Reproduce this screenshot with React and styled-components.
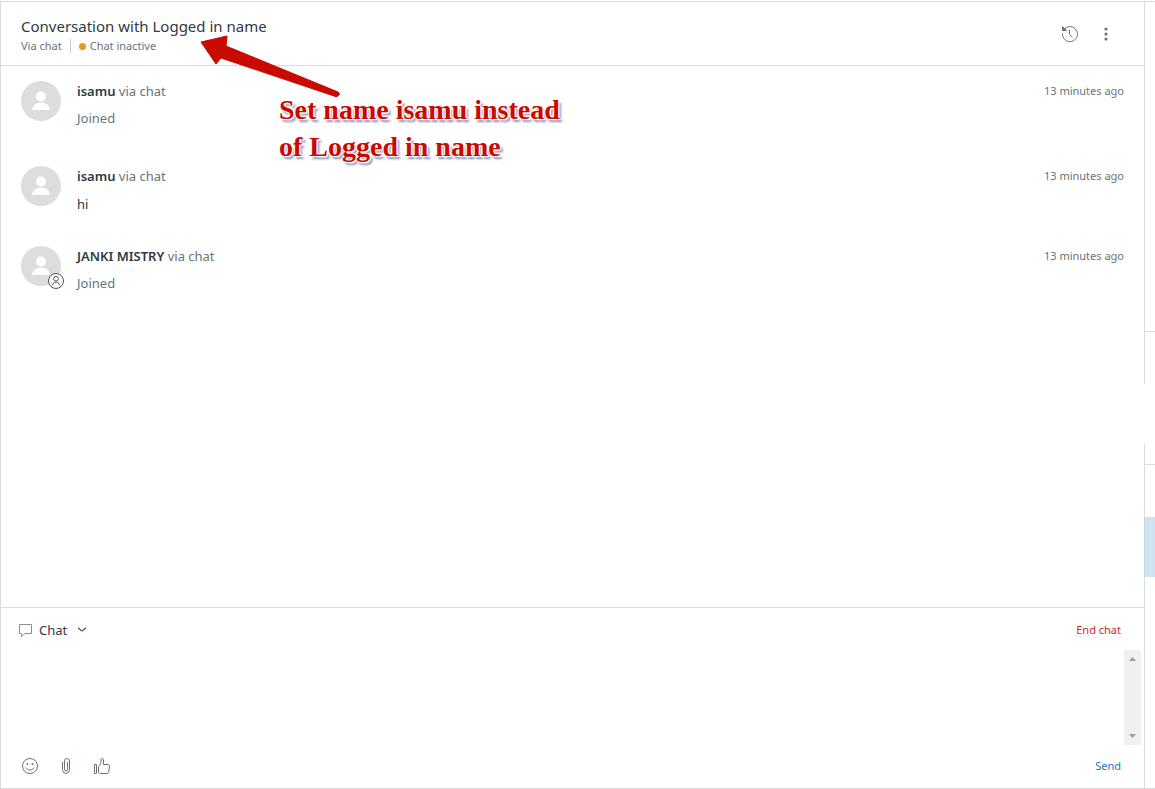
import React from 'react';
import styled, {createGlobalStyle, css} from 'styled-components';

const line = '#d8dcde';

const GlobalStyle = createGlobalStyle`
  * {
    box-sizing: border-box;
  }
  body {
    margin: 0;
    background: #fff;
    color: #2f3941;
    font-family: "Noto Sans", "Open Sans", sans-serif;
    font-size: 13px;
    line-height: 20px;
  }
  button, select, textarea {
    font: inherit;
    color: inherit;
    background: none;
    border: 0;
    padding: 0;
    margin: 0;
  }
  svg {
    display: block;
  }
`;

const Page = styled.div`
  display: flex;
  min-height: 100vh;
  padding-top: 1px;
`;

const Conversation = styled.main`
  position: relative;
  flex: 1;
  min-width: 0;
  display: flex;
  flex-direction: column;
  border: solid ${line};
  border-width: 1px 0 1px 1px;
`;

const Header = styled.header`
  display: flex;
  justify-content: space-between;
  height: 64px;
  padding: 14px 28px 0 20px;
  border-bottom: 1px solid ${line};
`;

const Title = styled.h1`
  margin: 0;
  font-size: 15px;
  font-weight: 400;
  line-height: 20px;
`;

const Status = styled.div`
  display: flex;
  align-items: center;
  font-size: 11px;
  color: #68737d;
`;

const Via = styled.span`
  padding-right: 8px;
  border-right: 1px solid #c2c8cc;
  line-height: 14px;
`;

const Dot = styled.span`
  width: 7px;
  height: 7px;
  margin: 0 4px 0 8px;
  border-radius: 50%;
  background: #ed961c;
`;

const IconRow = styled.div`
  display: flex;
  align-items: center;
  gap: 16px;
  height: 36px;
  color: #68737d;
`;

const IconButton = styled.button`
  display: flex;
  align-items: center;
  justify-content: center;
  width: 20px;
  height: 20px;
  color: #68737d;
  cursor: pointer;
`;

const Messages = styled.ul`
  flex: 1;
  margin: 0;
  padding: 15px 20px 0;
  list-style: none;
`;

const Message = styled.li`
  display: flex;
  padding-bottom: ${(props)=>(props.$event ? '38px':'32px')};
`;

const Avatar = styled.div`
  position: relative;
  width: 40px;
  height: 40px;
  margin-right: 16px;
`;

const Badge = styled.span`
  position: absolute;
  left: 27px;
  top: 27px;
`;

const Content = styled.div`
  flex: 1;
  color: #68737d;
`;

const Name = styled.strong`
  font-weight: 600;
  color: #2f3941;
`;

const Text = styled.p`
  margin: 7px 0 0;
  ${(props)=>!props.$event && css`
    margin-top: 8px;
    color: #2f3941;
  `};
`;

const Time = styled.time`
  font-size: 11px;
  color: #68737d;
`;

const Composer = styled.form`
  height: 181px;
  display: flex;
  flex-direction: column;
  border-top: 1px solid ${line};
`;

const Bar = styled.div`
  display: flex;
  align-items: center;
  justify-content: space-between;
  height: 42px;
  padding: 2px 23px 0 18px;
  ${(props)=>props.$bottom && css`
    height: 43px;
    padding: 0 23px 2px 19px;
  `};
`;

const Channel = styled.label`
  position: relative;
  display: flex;
  align-items: center;
  gap: 7px;
`;

const ChannelSelect = styled.select`
  appearance: none;
  width: 50px;
  height: 20px;
  cursor: pointer;
`;

const Chevron = styled.svg`
  position: absolute;
  right: 2px;
  top: 7px;
  pointer-events: none;
`;

const TextButton = styled.button`
  font-size: 11px;
  color: ${(props)=>props.$color};
  cursor: pointer;
`;

const Editor = styled.div`
  flex: 1;
  display: flex;
  padding-right: 3px;
`;

const Input = styled.textarea`
  flex: 1;
  padding: 0 20px;
  resize: none;
  outline: 0;
  overflow: hidden;
`;

const Scrollbar = styled.div`
  display: flex;
  flex-direction: column;
  align-items: center;
  justify-content: space-between;
  width: 17px;
  padding: 6px 0;
  background: #f0f0f0;
`;

const Side = styled.aside`
  width: 11px;
  display: flex;
  flex-direction: column;
  border: solid ${line};
  border-width: 1px 0;
`;

const SideBlock = styled.div`
  flex: ${(props)=>props.$height ? `0 0 ${props.$height}` : '1'};
  border-left: 1px solid ${(props)=>props.$blank ? 'transparent' : line};
  ${(props)=>props.$ruled && css`
    border-bottom: 1px solid ${line};
  `};
  ${(props)=>props.$active && css`
    border-left-color: #c6d6e3;
    background: #cee2f2;
  `};
`;

const Note = styled.div`
  position: absolute;
  left: 198px;
  top: 33px;
  pointer-events: none;
`;

const NoteText = styled.p`
  margin: -6px 0 0 80px;
  font: bold 28px/37px "Liberation Serif", serif;
  white-space: nowrap;
  color: #c80a00;
  text-shadow: 1px 0 1px #fff, -1px 0 1px #fff, 0 1px 1px #fff, 0 -1px 1px #fff, 1px 1px #fff, 2px 3px 2px #a3a3c8, 3px 3px 2px #b4b4d4;
`;

const messages = [
  {name:'isamu', text:'Joined', event:true},
  {name:'isamu', text:'hi'},
  {name:'JANKI MISTRY', text:'Joined', event:true, agent:true}
];

function Person() {
  return (
    <svg width='40' height='40' viewBox='0 0 40 40'>
      <circle cx='20' cy='20' r='20' fill='#ddd'/>
      <circle cx='20' cy='15.5' r='5' fill='#fff'/>
      <path d='M11 29c.6-4.500 4-7.500 9-7.500s8.400 3 9 7.500z' fill='#fff'/>
    </svg>
  )
}

function AgentBadge() {
  return (
    <Badge>
      <svg width='16' height='16' viewBox='0 0 16 16' fill='none' stroke='#49545c'>
        <circle cx='8' cy='8' r='7.500' fill='#fff'/>
        <circle cx='8' cy='5.700' r='2.300'/>
        <path d='M4.500 12.300c.2-2 1.500-3.200 3.500-3.200s3.300 1.200 3.500 3.200'/>
      </svg>
    </Badge>
  )
}

function App() {
  return (
    <Page>
      <GlobalStyle/>
      <Conversation>
        <Header>
          <div>
            <Title>Conversation with Logged in name</Title>
            <Status>
              <Via>Via chat</Via>
              <Dot/>
              <span>Chat inactive</span>
            </Status>
          </div>
          <IconRow>
            <IconButton aria-label='History'>
              <svg width='18' height='18' viewBox='0 0 18 18' fill='none' stroke='currentColor'>
                <path d='M3.500 4A7.500 7.500 0 1 1 1.500 8.500'/>
                <path d='M8.500 5v4.500l3 3'/>
                <path d='M1.500 1.500v4h4z' fill='currentColor'/>
              </svg>
            </IconButton>
            <IconButton aria-label='More options'>
              <svg width='4' height='14' viewBox='0 0 4 14' fill='currentColor'>
                <circle cx='2' cy='2' r='1.600'/>
                <circle cx='2' cy='7' r='1.600'/>
                <circle cx='2' cy='12' r='1.600'/>
              </svg>
            </IconButton>
          </IconRow>
        </Header>

        <Messages>
          {messages.map((m, i)=>(
            <Message key={i} $event={m.event}>
              <Avatar>
                <Person/>
                {m.agent && <AgentBadge/>}
              </Avatar>
              <Content>
                <div><Name>{m.name}</Name> via chat</div>
                <Text $event={m.event}>{m.text}</Text>
              </Content>
              <Time>13 minutes ago</Time>
            </Message>
          ))}
        </Messages>

        <Composer onSubmit={(e)=>e.preventDefault()}>
          <Bar>
            <Channel>
              <svg width='13' height='13' viewBox='0 0 13 13' fill='none' stroke='#87929d'>
                <path d='M.5.5h12v9H6l-3.500 3v-3h-2z'/>
              </svg>
              <ChannelSelect aria-label='Channel'>
                <option>Chat</option>
              </ChannelSelect>
              <Chevron width='10' height='5' viewBox='0 0 10 5' fill='none' stroke='#49545c' strokeWidth='1.200'>
                <path d='M1 .7l3.200 2.800q.8.600 1.600 0L9 .7'/>
              </Chevron>
            </Channel>
            <TextButton type='button' $color='#c72a1c'>End chat</TextButton>
          </Bar>
          <Editor>
            <Input aria-label='Message'/>
            <Scrollbar>
              <svg width='7' height='5' viewBox='0 0 7 5'><path d='M0 5l3.500-4L7 5z' fill='#a0a0a0'/></svg>
              <svg width='7' height='5' viewBox='0 0 7 5'><path d='M0 0l3.500 4L7 0z' fill='#a0a0a0'/></svg>
            </Scrollbar>
          </Editor>
          <Bar $bottom>
            <IconRow>
              <IconButton type='button' aria-label='Emoji'>
                <svg width='16' height='16' viewBox='0 0 16 16' fill='none' stroke='currentColor'>
                  <circle cx='8' cy='8' r='7.500'/>
                  <path d='M4 9.500c.8 1.700 2.200 2.500 4 2.500s3.200-.8 4-2.500'/>
                  <circle cx='5.500' cy='6' r='1' fill='currentColor' stroke='none'/>
                  <circle cx='10.500' cy='6' r='1' fill='currentColor' stroke='none'/>
                </svg>
              </IconButton>
              <IconButton type='button' aria-label='Attach file'>
                <svg width='10' height='16' viewBox='0 0 10 16' fill='none' stroke='currentColor'>
                  <path d='M1.500 4v7.500a3.500 4 0 0 0 7 0V3a2.500 2.500 0 0 0-5 0v8.500a1.500 1.500 0 0 0 3 0V4'/>
                </svg>
              </IconButton>
              <IconButton type='button' aria-label='Thumbs up'>
                <svg width='16' height='16' viewBox='0 0 16 16' fill='none' stroke='currentColor' strokeLinejoin='round'>
                  <path d='M.5 6.500h2v9h-2zM4.500 14V8.500C6.500 7 7 5 7 2c0-2 2.500-2 2.500 0v4.500h4.500c1 0 1.500.6 1.500 1.500l-.8 6c-.2 1-.7 1.500-1.700 1.500H6.500c-1 0-2-.5-2-1.500z'/>
                </svg>
              </IconButton>
            </IconRow>
            <TextButton type='submit' $color='#1f73b7'>Send</TextButton>
          </Bar>
        </Composer>

        <Note>
          <svg width='142' height='62' viewBox='0 0 142 62'>
            <path d='M2 7L28 1l-1 10 112 46q3 2 0 4-2 1-4 0L22 23l-5 6z' fill='#c80a00' stroke='#c80a00' strokeLinejoin='round'/>
          </svg>
          <NoteText>Set name isamu instead<br/>of Logged in name</NoteText>
        </Note>
      </Conversation>

      <Side>
        <SideBlock $height='330px' $ruled/>
        <SideBlock $height='52px'/>
        <SideBlock $height='60px' $blank/>
        <SideBlock $height='21px' $ruled/>
        <SideBlock $height='52px'/>
        <SideBlock $height='60px' $active/>
        <SideBlock/>
      </Side>
    </Page>
  )
}

export default App;
